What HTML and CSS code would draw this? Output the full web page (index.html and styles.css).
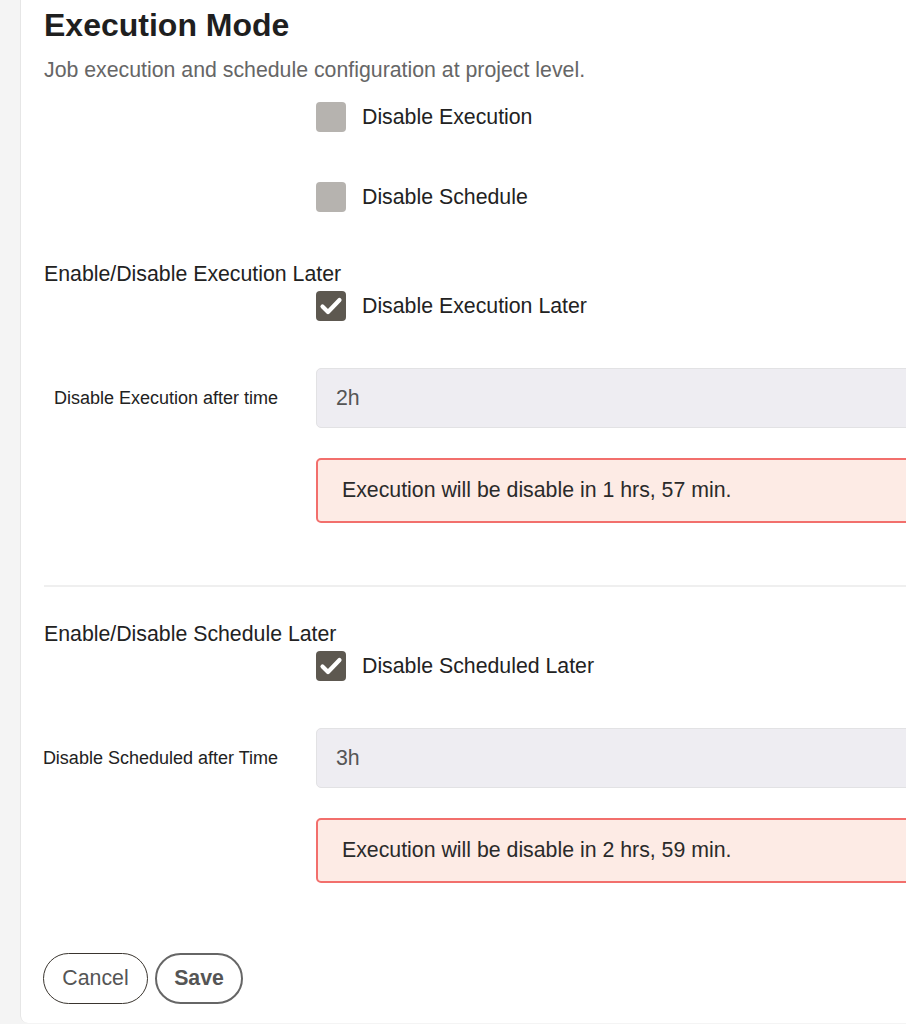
FILE: index.html
```html
<!DOCTYPE html>
<html>
<head>
<meta charset="utf-8">
<link rel="stylesheet" href="styles.css">
</head>
<body>
<div class="layout">
  <div class="rail"></div>
  <main class="panel">
    <h1 class="title">Execution Mode</h1>
    <p class="subtitle">Job execution and schedule configuration at project level.</p>

    <div class="row cb-row first">
      <div class="label-col"></div>
      <label class="check"><span class="box"></span><span class="check-text">Disable Execution</span></label>
    </div>
    <div class="row cb-row second">
      <div class="label-col"></div>
      <label class="check"><span class="box"></span><span class="check-text">Disable Schedule</span></label>
    </div>

    <section class="later">
      <h2 class="section-head">Enable/Disable Execution Later</h2>
      <div class="row cb-row tight">
        <div class="label-col"></div>
        <label class="check"><span class="box on"><svg viewBox="0 0 30 30" width="30" height="30"><path d="M6.5 15.5 L12 21 L23.5 9" fill="none" stroke="#fff" stroke-width="4.2" stroke-linecap="round" stroke-linejoin="round"/></svg></span><span class="check-text">Disable Execution Later</span></label>
      </div>
      <div class="row field-row">
        <div class="label-col field-label"><span>Disable Execution after time</span></div>
        <div class="input">2h</div>
      </div>
      <div class="row alert-row">
        <div class="label-col"></div>
        <div class="alert">Execution will be disable in 1 hrs, 57 min.</div>
      </div>
    </section>

    <hr class="divider">

    <section class="later second-later">
      <h2 class="section-head">Enable/Disable Schedule Later</h2>
      <div class="row cb-row tight">
        <div class="label-col"></div>
        <label class="check"><span class="box on"><svg viewBox="0 0 30 30" width="30" height="30"><path d="M6.5 15.5 L12 21 L23.5 9" fill="none" stroke="#fff" stroke-width="4.2" stroke-linecap="round" stroke-linejoin="round"/></svg></span><span class="check-text">Disable Scheduled Later</span></label>
      </div>
      <div class="row field-row">
        <div class="label-col field-label"><span>Disable Scheduled after Time</span></div>
        <div class="input">3h</div>
      </div>
      <div class="row alert-row">
        <div class="label-col"></div>
        <div class="alert">Execution will be disable in 2 hrs, 59 min.</div>
      </div>
    </section>

    <div class="actions">
      <button class="btn cancel">Cancel</button>
      <button class="btn save">Save</button>
    </div>
  </main>
</div>
</body>
</html>
```

FILE: styles.css
```css
html, body {
  margin: 0;
  padding: 0;
  background: #f4f4f4;
  overflow: hidden;
  font-family: "Liberation Sans", Arial, sans-serif;
  color: #222;
}

.layout {
  display: flex;
  width: 1100px;
  align-items: flex-start;
}

.rail {
  width: 20px;
  flex: none;
}

.panel {
  flex: 1;
  background: #fff;
  border-left: 1px solid #e6e6e6;
  border-bottom-left-radius: 8px;
  padding: 0 0 19px 23px;
  box-sizing: border-box;
}

.title {
  margin: 8px 0 0;
  font-size: 32px;
  line-height: 34px;
  font-weight: bold;
  color: #1f1f1f;
}

.subtitle {
  margin: 16px 0 0;
  font-size: 21.3px;
  line-height: 24px;
  color: #666;
}

.row {
  display: flex;
  align-items: center;
}

.label-col {
  width: 272px;
  flex: none;
  box-sizing: border-box;
}

.cb-row.first { margin-top: 20px; }
.cb-row.second { margin-top: 50px; }
.cb-row.tight { margin-top: 5px; }

.check {
  display: flex;
  align-items: center;
  gap: 16px;
  height: 30px;
}

.box {
  width: 30px;
  height: 30px;
  border-radius: 4px;
  background: #b6b3af;
  display: flex;
  align-items: center;
  justify-content: center;
  box-sizing: border-box;
}

.box.on {
  background: #5d5850;
}

.box svg { display: block; }

.check-text {
  font-size: 21.3px;
  line-height: 24px;
  color: #222;
}

.later { margin-top: 50px; }
.second-later { margin-top: 35px; }

.section-head {
  margin: 0;
  font-size: 21.3px;
  line-height: 24px;
  font-weight: normal;
  color: #222;
}

.field-row { margin-top: 47px; }

.field-label {
  display: flex;
  justify-content: flex-end;
  padding-right: 38px;
  font-size: 18px;
  color: #222;
  white-space: nowrap;
}

.field-label span {
  flex: none;
}

.input {
  flex: 1;
  height: 60px;
  box-sizing: border-box;
  background: #eeedf2;
  border: 1px solid #e2e2e4;
  border-radius: 5px;
  padding: 0 19px;
  display: flex;
  align-items: center;
  font-size: 21.3px;
  color: #555;
}

.alert-row { margin-top: 30px; }

.alert {
  flex: 1;
  height: 65px;
  box-sizing: border-box;
  background: #fdebe5;
  border: 2px solid #f26f6c;
  border-radius: 5px;
  padding: 0 24px;
  display: flex;
  align-items: center;
  font-size: 21.3px;
  color: #2a2a2a;
}

.divider {
  margin: 62px 0 0;
  border: none;
  border-top: 2px solid #efefef;
  height: 0;
}

.actions {
  margin-top: 70px;
  display: flex;
  gap: 7px;
  margin-left: -1px;
}

.btn {
  height: 51px;
  border-radius: 26px;
  background: #fff;
  font-family: "Liberation Sans", Arial, sans-serif;
  font-size: 21.3px;
  cursor: pointer;
  box-sizing: border-box;
}

.cancel {
  width: 105px;
  border: 1px solid #3a352f;
  color: #555;
}

.save {
  width: 88px;
  border: 2px solid #666;
  color: #555;
  font-weight: bold;
}
```
